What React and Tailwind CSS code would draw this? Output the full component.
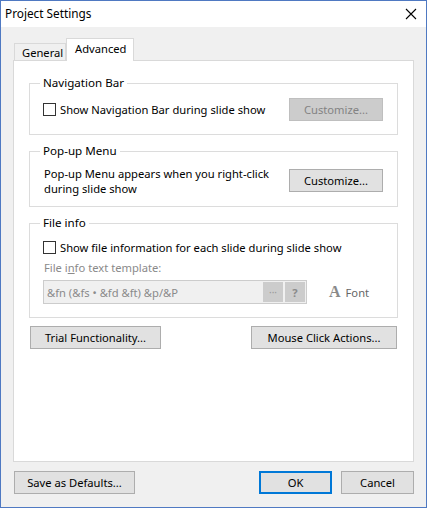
import React from 'react';

const font = { fontFamily: '"Noto Sans", "Segoe UI", sans-serif' };

function CheckBox({ label }) {
  return (
    <label className="flex items-center gap-[4px] h-[15px]">
      <span className="w-[13px] h-[13px] border border-[#333333] bg-white shrink-0" />
      <span>{label}</span>
    </label>
  );
}

function Btn({ children, className = '', disabled = false }) {
  return (
    <button
      type="button"
      disabled={disabled}
      className={`h-[23px] flex items-center justify-center border ${
        disabled ? 'bg-[#cccccc] border-[#bfbfbf] text-[#838383]' : 'bg-[#e1e1e1] border-[#adadad] text-black'
      } ${className}`}
    >
      {children}
    </button>
  );
}

function Group({ title, className = '', children }) {
  return (
    <fieldset className={`border border-[#dcdcdc] mx-[15px] px-[13px] ${className}`}>
      <legend className="px-[3px] ml-[-3px] leading-[16px] text-[11.6px]">{title}</legend>
      {children}
    </fieldset>
  );
}

export default function App() {
  return (
    <div
      className="w-[427px] h-[508px] border border-[#4f79c2] bg-[#f0f0f0] flex flex-col text-[11.2px] leading-[15px] text-black select-none"
      style={font}
    >
      {/* title bar */}
      <div className="h-[26px] bg-white flex items-center justify-between pl-[4px] pr-[9px] pb-[1px] shrink-0">
        <span className="text-[11.8px]">Project Settings</span>
        <svg width="12" height="12" viewBox="0 0 12 12" className="mt-[1px]">
          <path d="M1 1 L11 11 M11 1 L1 11" stroke="#000" strokeWidth="1.1" fill="none" />
        </svg>
      </div>

      <div className="px-[12px] pt-[11px] flex flex-col flex-1">
        {/* tabs */}
        <div className="flex items-end h-[22px] pl-[1px] relative z-10">
          <div className="h-[17px] w-[52px] border border-b-0 border-[#d9d9d9] bg-[#f0f0f0] flex items-center pl-[7px]">
            General
          </div>
          <div className="h-[23px] w-[68px] -mb-px border border-b-0 border-[#d9d9d9] bg-white flex items-start pt-[2px] pl-[8px]">
            Advanced
          </div>
        </div>

        {/* panel */}
        <div className="h-[402px] border border-[#d9d9d9] bg-white flex flex-col">
          <Group title="Navigation Bar" className="mt-[14px] pt-[7px] pb-[13px]">
            <div className="flex items-center justify-between pr-[1px]">
              <CheckBox label="Show Navigation Bar during slide show" />
              <Btn disabled className="w-[94px]">Customize...</Btn>
            </div>
          </Group>

          <Group title="Pop-up Menu" className="mt-[8px] pt-[6px] pb-[10px]">
            <div className="flex items-center justify-between pr-[1px]">
              <div className="pl-[1px] pt-[1px]">
                <div>Pop-up Menu appears when you right-click</div>
                <div>during slide show</div>
              </div>
              <Btn className="w-[94px]">Customize...</Btn>
            </div>
          </Group>

          <Group title="File info" className="mt-[8px] pt-[9px] pb-[13px]">
            <CheckBox label="Show file information for each slide during slide show" />
            <div className="text-[#8a8a8a] mt-[5px] pl-[1px]">
              File i<span className="underline">n</span>fo text template:
            </div>
            <div className="flex items-center mt-[5px]">
              <div className="w-[264px] h-[24px] border border-[#cccccc] bg-[#f0f0f0] flex items-center pl-[3px] pr-[1px]">
                <span className="flex-1 text-[#8a8a8a]">&amp;fn (&amp;fs • &amp;fd &amp;ft) &amp;p/&amp;P</span>
                <span className="w-[20px] h-[20px] bg-[#cccccc] flex items-center justify-center text-[#9a9a9a] text-[10px] leading-none">
                  ···
                </span>
                <span className="w-[20px] h-[20px] ml-[2px] bg-[#cccccc] flex items-center justify-center text-[#8a8a8a] font-bold">
                  ?
                </span>
              </div>
              <div className="ml-[22px] flex items-center gap-[5px] text-[#666666]">
                <span
                  className="text-[16px] font-bold text-[#8a8a8a] leading-none"
                  style={{ fontFamily: '"Liberation Serif", serif' }}
                >
                  A
                </span>
                <span>Font</span>
              </div>
            </div>
          </Group>

          <div className="flex justify-between mx-[16px] mt-[8px]">
            <Btn className="w-[131px]">Trial Functionality...</Btn>
            <Btn className="w-[146px]">Mouse Click Actions...</Btn>
          </div>
        </div>

        {/* bottom buttons */}
        <div className="flex items-center mt-[9px] pl-[1px]">
          <Btn className="w-[121px]">Save as Defaults...</Btn>
          <div className="flex-1" />
          <button
            type="button"
            className="w-[73px] h-[23px] border-2 border-[#0078d7] bg-[#e1e1e1] flex items-center justify-center"
          >
            OK
          </button>
          <Btn className="w-[73px] ml-[9px]">Cancel</Btn>
        </div>
      </div>
    </div>
  );
}
